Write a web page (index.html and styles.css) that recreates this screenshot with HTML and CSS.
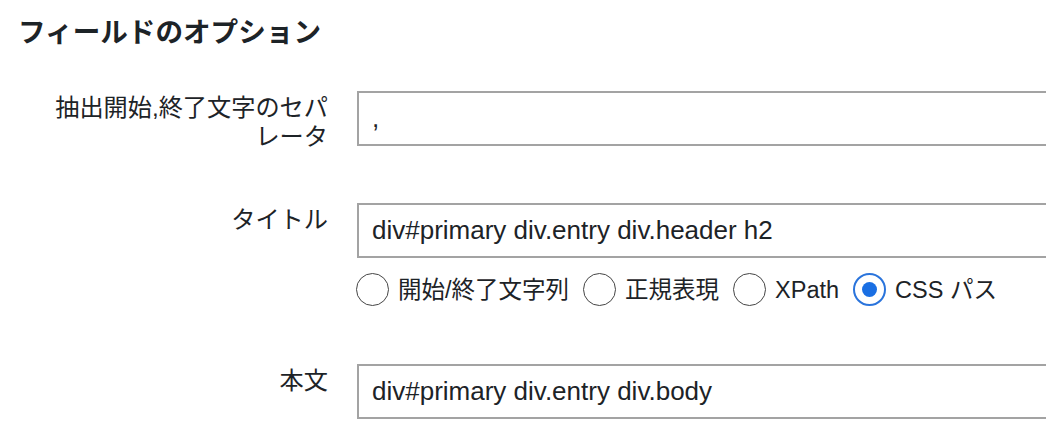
FILE: index.html
```html
<!DOCTYPE html>
<html lang="ja">
<head>
<meta charset="utf-8">
<title>フィールドのオプション</title>
<link rel="stylesheet" href="styles.css">
</head>
<body>
<div class="wrap">
  <h2 class="title">フィールドのオプション</h2>
  <div class="form-table">
    <div class="row">
      <div class="th"><label for="sep">抽出開始,終了文字のセパレータ</label></div>
      <div class="td"><input id="sep" class="text-field" type="text" value=","></div>
    </div>
    <div class="row">
      <div class="th"><label for="title">タイトル</label></div>
      <div class="td">
        <input id="title" class="text-field" type="text" value="div#primary div.entry div.header h2">
        <div class="radios">
          <label class="radio-label"><span class="radio"></span>開始/終了文字列</label>
          <label class="radio-label"><span class="radio"></span>正規表現</label>
          <label class="radio-label"><span class="radio"></span>XPath</label>
          <label class="radio-label"><span class="radio checked"></span>CSS パス</label>
        </div>
      </div>
    </div>
    <div class="row">
      <div class="th"><label for="body">本文</label></div>
      <div class="td"><input id="body" class="text-field" type="text" value="div#primary div.entry div.body"></div>
    </div>
  </div>
</div>
</body>
</html>
```

FILE: styles.css
```css
html, body {
  margin: 0;
  padding: 0;
  overflow: hidden;
  background: #ffffff;
}

body {
  font-family: "Liberation Sans", "Noto Sans CJK JP", sans-serif;
  color: #1d2327;
}

.wrap {
  padding-left: 18px;
}

.title {
  margin: 13px 0 9px;
  font-size: 27.6px;
  line-height: 40px;
  font-weight: 700;
  color: #1d2327;
}

.row {
  display: grid;
  grid-template-columns: 339px 1fr;
}

.th {
  padding: 31px 29px 0 28px;
  text-align: right;
  font-size: 24.2px;
  line-height: 29px;
  color: #1d2327;
}

.td {
  padding: 28.5px 0;
  min-width: 0;
}

.text-field {
  display: block;
  box-sizing: border-box;
  width: 100%;
  height: 55px;
  margin: 0;
  padding: 0 13px;
  border: 2px solid #a3a3a3;
  border-right: none;
  border-radius: 0;
  background: #ffffff;
  font-family: "Liberation Sans", "Noto Sans CJK JP", sans-serif;
  font-size: 26px;
  color: #1d2327;
  outline: none;
}

.radios {
  display: flex;
  align-items: center;
  height: 34px;
  margin-top: 15px;
  margin-left: -1px;
}

.radio-label {
  display: flex;
  align-items: center;
  margin-right: 14px;
  font-size: 23.5px;
  line-height: 34px;
  color: #1d2327;
  white-space: nowrap;
}

.radio {
  box-sizing: border-box;
  width: 33px;
  height: 33px;
  margin-right: 9px;
  border: 1.7px solid #454545;
  border-radius: 50%;
  background: #ffffff;
  flex: none;
  display: flex;
  align-items: center;
  justify-content: center;
}

.radio.checked {
  border: 2.2px solid #2a74dc;
}

.radio.checked::before {
  content: "";
  width: 15px;
  height: 15px;
  border-radius: 50%;
  background: #1a6fe3;
}
```
